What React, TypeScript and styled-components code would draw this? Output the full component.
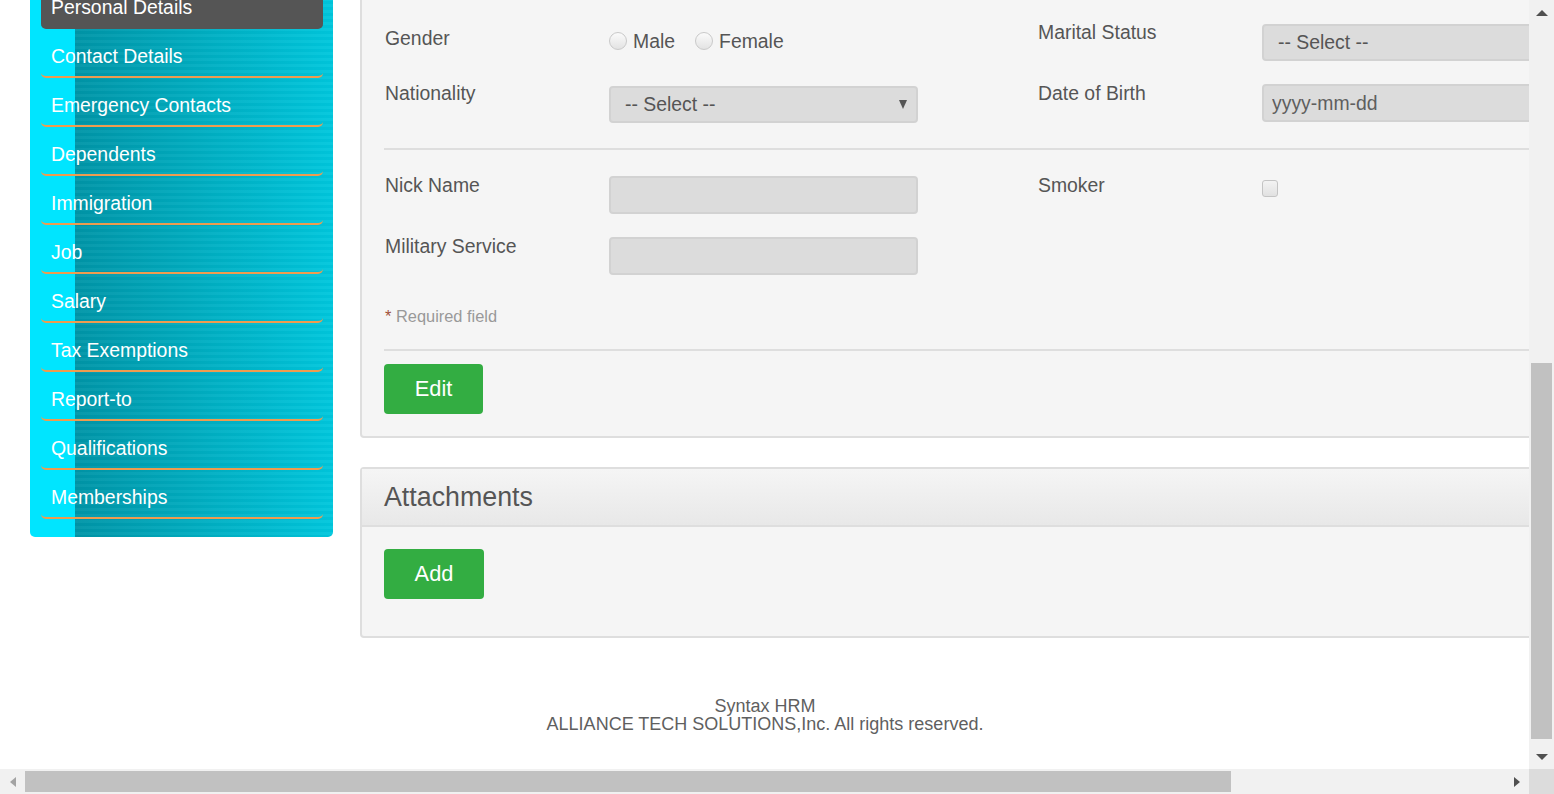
import React from 'react';
import styled, { createGlobalStyle } from 'styled-components';

const Global = createGlobalStyle`
  html, body { margin: 0; padding: 0; background: #fff; overflow: hidden; }
  body { font-family: "Liberation Sans", Arial, sans-serif; }
  * { box-sizing: border-box; }
`;

const Frame = styled.div`
  width: 1554px;
  height: 794px;
  display: grid;
  grid-template-columns: 1529px 25px;
  grid-template-rows: 769px 25px;
  overflow: hidden;
`;

const Viewport = styled.div`
  overflow: hidden;
  background: #fff;
`;

const Page = styled.div`
  margin-top: -20px;
  width: 1597px;
  display: flex;
  flex-direction: column;
`;

const ContentRow = styled.div`
  display: flex;
  align-items: flex-start;
  padding-left: 30px;
  gap: 27px;
`;

/* ---------- Sidebar ---------- */
const Sidebar = styled.nav`
  width: 303px;
  flex: none;
  padding: 0 10px 18px 11px;
  border-radius: 0 0 5px 5px;
  background:
    repeating-linear-gradient(to bottom, rgba(255,255,255,0.035) 0 3px, rgba(0,0,0,0.02) 3px 6px) 45px 0 / calc(100% - 45px) 100% no-repeat,
    linear-gradient(to right, #00e5ff 0 45px, #0095a7 45px, #00c7dd 100%);
`;

const NavItem = styled.a<{ $active?: boolean }>`
  display: block;
  color: #fff;
  font-size: 19.4px;
  line-height: 22px;
  padding: 16px 0 9px 10px;
  text-decoration: none;
  border-bottom: 2px solid ${(p) => (p.$active ? '#555555' : '#ee9c4f')};
  border-radius: 0 0 5px 5px;
  background: ${(p) => (p.$active ? '#555555' : 'transparent')};
`;

/* ---------- Main ---------- */
const Main = styled.main`
  width: 1237px;
  flex: none;
  display: flex;
  flex-direction: column;
`;

const Panel = styled.section<{ $gapTop?: number }>`
  margin-top: ${(p) => p.$gapTop ?? 0}px;
  background: #f5f5f5;
  border: 2px solid #dedede;
  border-radius: 4px;
`;

const PanelBody = styled.div<{ $pt: number; $pb: number }>`
  padding: ${(p) => p.$pt}px 24px ${(p) => p.$pb}px 22px;
`;

const PanelHeader = styled.header`
  height: 58px;
  border-bottom: 2px solid #dedede;
  background: linear-gradient(to bottom, #f5f5f5, #e8e8e8);
  padding-left: 22px;
  display: flex;
  align-items: center;
  font-size: 26.8px;
  color: #555;
`;

const Columns = styled.div<{ $pt?: number }>`
  display: flex;
  gap: 119px;
  padding-top: ${(p) => p.$pt ?? 0}px;
`;

const Column = styled.div`
  width: 534px;
  display: flex;
  flex-direction: column;
`;

const Row = styled.div<{ $h: number }>`
  height: ${(p) => p.$h}px;
  display: flex;
  align-items: flex-start;
`;

const Label = styled.label<{ $dy: number }>`
  width: 225px;
  flex: none;
  margin-top: ${(p) => p.$dy}px;
  padding-left: 1px;
  font-size: 19.4px;
  line-height: 22px;
  color: #555;
`;

const SelectBox = styled.div`
  width: 309px;
  height: 37px;
  flex: none;
  background: #dcdcdc;
  border: 2px solid #d2d2d2;
  border-radius: 4px;
  display: flex;
  align-items: center;
  justify-content: space-between;
  padding: 0 9px 0 14px;
  font-size: 19.4px;
  color: #555;
`;

const Caret = styled.span`
  width: 0;
  height: 0;
  border-left: 4.5px solid transparent;
  border-right: 4.5px solid transparent;
  border-top: 9px solid #555;
`;

const TextInput = styled.input`
  width: 309px;
  height: 38px;
  flex: none;
  background: #dcdcdc;
  border: 2px solid #d2d2d2;
  border-radius: 4px;
  padding: 0 8px;
  font-family: "Liberation Sans", Arial, sans-serif;
  font-size: 19.4px;
  color: #555;
  outline: none;
  &::placeholder { color: #5f5f5f; opacity: 1; }
`;

const RadioGroup = styled.div`
  display: flex;
  align-items: center;
  margin-top: 8px;
  height: 18px;
  font-size: 19.4px;
  color: #555;
`;

const Radio = styled.input`
  appearance: none;
  width: 18px;
  height: 18px;
  margin: 0;
  border-radius: 50%;
  border: 1px solid #c9c9c9;
  background: linear-gradient(to bottom, #fbfbfb, #e3e3e3);
`;

const RadioText = styled.span<{ $mr?: number }>`
  margin-left: 6px;
  margin-right: ${(p) => p.$mr ?? 0}px;
  line-height: 22px;
`;

const Checkbox = styled.input`
  appearance: none;
  width: 16px;
  height: 17px;
  margin: 4px 0 0 0;
  border: 1px solid #c4c4c4;
  border-radius: 3px;
  background: linear-gradient(to bottom, #f3f3f3, #e1e1e1);
`;

const Divider = styled.hr<{ $mt: number }>`
  margin: ${(p) => p.$mt}px 0 0 0;
  border: none;
  height: 2px;
  background: #dedede;
`;

const Required = styled.p`
  margin: 31px 0 0 1px;
  font-size: 16.4px;
  line-height: 20px;
  color: #999;
  & span { color: #a0523a; }
`;

const GreenButton = styled.button<{ $mt: number; $w: number }>`
  display: block;
  margin-top: ${(p) => p.$mt}px;
  width: ${(p) => p.$w}px;
  height: 50px;
  border: none;
  border-radius: 4px;
  background: #33ad42;
  color: #fff;
  font-family: "Liberation Sans", Arial, sans-serif;
  font-size: 21.8px;
  padding: 0;
`;

const Footer = styled.footer`
  width: 1530px;
  margin-top: 59px;
  padding-bottom: 36px;
  text-align: center;
  font-size: 18px;
  line-height: 18px;
  color: #5f5f5f;
`;

/* ---------- Scrollbars ---------- */
const VBar = styled.div`
  background: #f1f1f1;
  display: flex;
  flex-direction: column;
`;

const HBar = styled.div`
  background: #f1f1f1;
  display: flex;
`;

const Corner = styled.div`
  background: #dcdcdc;
`;

const SBtn = styled.div`
  width: 25px;
  height: 25px;
  flex: none;
  display: flex;
  align-items: center;
  justify-content: center;
`;

const Tri = styled.span<{ $dir: 'up' | 'down' | 'left' | 'right'; $dim?: boolean }>`
  width: 0;
  height: 0;
  ${(p) => {
    const c = p.$dim ? '#a3a3a3' : '#505050';
    switch (p.$dir) {
      case 'up':
        return `border-left:6px solid transparent;border-right:6px solid transparent;border-bottom:6px solid ${c};`;
      case 'down':
        return `border-left:6px solid transparent;border-right:6px solid transparent;border-top:6px solid ${c};`;
      case 'left':
        return `border-top:5.5px solid transparent;border-bottom:5.5px solid transparent;border-right:6px solid ${c};`;
      default:
        return `border-top:5.5px solid transparent;border-bottom:5.5px solid transparent;border-left:6px solid ${c};`;
    }
  }}
`;

const VTrack = styled.div`
  flex: 1;
  display: flex;
  flex-direction: column;
  justify-content: flex-end;
  padding: 0 2px 5px 2px;
`;

const HTrack = styled.div`
  flex: 1;
  display: flex;
  padding: 2px 0;
`;

const Thumb = styled.div<{ $len: number; $vertical?: boolean }>`
  background: #c1c1c1;
  flex: none;
  ${(p) => (p.$vertical ? `height:${p.$len}px;` : `width:${p.$len}px;`)}
`;

const navItems = [
  'Contact Details',
  'Emergency Contacts',
  'Dependents',
  'Immigration',
  'Job',
  'Salary',
  'Tax Exemptions',
  'Report-to',
  'Qualifications',
  'Memberships',
];

export default function App() {
  return (
    <>
      <Global />
      <Frame>
        <Viewport>
          <Page>
            <ContentRow>
              <Sidebar>
                <NavItem $active>Personal Details</NavItem>
                {navItems.map((t) => (
                  <NavItem key={t}>{t}</NavItem>
                ))}
              </Sidebar>

              <Main>
                <Panel>
                  <PanelBody $pt={42} $pb={22}>
                    <Columns>
                      <Column>
                        <Row $h={62}>
                          <Label $dy={3}>Gender</Label>
                          <RadioGroup>
                            <Radio type="radio" name="gender" />
                            <RadioText $mr={20}>Male</RadioText>
                            <Radio type="radio" name="gender" />
                            <RadioText>Female</RadioText>
                          </RadioGroup>
                        </Row>
                        <Row $h={37}>
                          <Label $dy={-4}>Nationality</Label>
                          <SelectBox>
                            <span>-- Select --</span>
                            <Caret />
                          </SelectBox>
                        </Row>
                      </Column>
                      <Column>
                        <Row $h={60}>
                          <Label $dy={-3}>Marital Status</Label>
                          <SelectBox>
                            <span>-- Select --</span>
                            <Caret />
                          </SelectBox>
                        </Row>
                        <Row $h={38}>
                          <Label $dy={-2}>Date of Birth</Label>
                          <TextInput placeholder="yyyy-mm-dd" readOnly />
                        </Row>
                      </Column>
                    </Columns>

                    <Divider $mt={25} />

                    <Columns $pt={26}>
                      <Column>
                        <Row $h={61}>
                          <Label $dy={-2}>Nick Name</Label>
                          <TextInput readOnly />
                        </Row>
                        <Row $h={38}>
                          <Label $dy={-2}>Military Service</Label>
                          <TextInput readOnly />
                        </Row>
                      </Column>
                      <Column>
                        <Row $h={38}>
                          <Label $dy={-2}>Smoker</Label>
                          <Checkbox type="checkbox" />
                        </Row>
                      </Column>
                    </Columns>

                    <Required>
                      <span>*</span> Required field
                    </Required>

                    <Divider $mt={23} />

                    <GreenButton $mt={13} $w={99}>Edit</GreenButton>
                  </PanelBody>
                </Panel>

                <Panel $gapTop={29}>
                  <PanelHeader>Attachments</PanelHeader>
                  <PanelBody $pt={22} $pb={37}>
                    <GreenButton $mt={0} $w={100}>Add</GreenButton>
                  </PanelBody>
                </Panel>
              </Main>
            </ContentRow>

            <Footer>
              Syntax HRM
              <br />
              ALLIANCE TECH SOLUTIONS,Inc. All rights reserved.
            </Footer>
          </Page>
        </Viewport>

        <VBar>
          <SBtn>
            <Tri $dir="up" />
          </SBtn>
          <VTrack>
            <Thumb $vertical $len={376} />
          </VTrack>
          <SBtn>
            <Tri $dir="down" />
          </SBtn>
        </VBar>

        <HBar>
          <SBtn>
            <Tri $dir="left" $dim />
          </SBtn>
          <HTrack>
            <Thumb $len={1206} />
          </HTrack>
          <SBtn>
            <Tri $dir="right" />
          </SBtn>
        </HBar>
        <Corner />
      </Frame>
    </>
  );
}
